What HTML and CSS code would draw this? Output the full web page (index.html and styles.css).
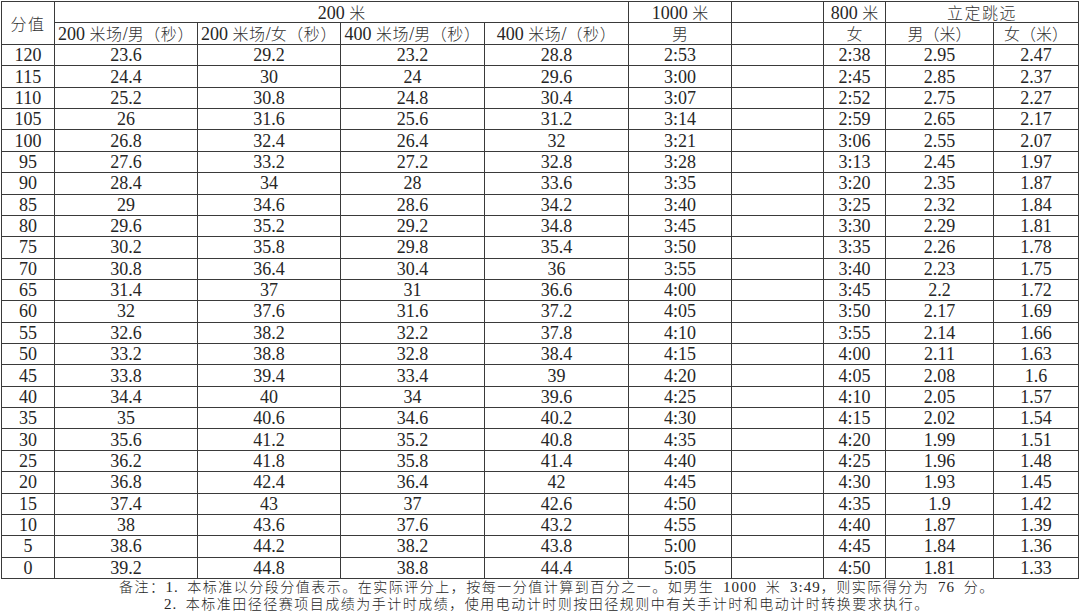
FILE: index.html
```html
<!DOCTYPE html>
<html lang="zh">
<head>
<meta charset="utf-8">
<title>评分标准</title>
<link rel="stylesheet" href="styles.css">
</head>
<body>
<div class="page">
<table class="score">
<colgroup>
<col class="w-score"><col class="w-200m"><col class="w-200f"><col class="w-400m"><col class="w-400f"><col class="w-1000"><col class="w-blank"><col class="w-800"><col class="w-jm"><col class="w-jf">
</colgroup>
<thead>
<tr class="h1">
<th rowspan="2"><span class="cn big">分值</span></th>
<th colspan="4">200 <span class="cn">米</span></th>
<th>1000 <span class="cn">米</span></th>
<th class="dash"></th>
<th>800 <span class="cn">米</span></th>
<th colspan="2"><span class="cn big">立定跳远</span></th>
</tr>
<tr class="h2">
<th>200 <span class="cn wide">米场</span>/<span class="cn wide">男（秒）</span></th>
<th>200 <span class="cn wide">米场</span>/<span class="cn wide">女（秒）</span></th>
<th>400 <span class="cn wide">米场</span>/<span class="cn wide">男（秒）</span></th>
<th>400 <span class="cn wide">米场</span>/<span class="cn wide">（秒）</span></th>
<th><span class="cn">男</span></th>
<th class="dash"></th>
<th><span class="cn">女</span></th>
<th><span class="cn">男（米）</span></th>
<th><span class="cn">女（米）</span></th>
</tr>
</thead>
<tbody id="rows"></tbody>
</table>
<div class="notes">
<p class="n1">备注：<span class="lat">1.</span> 本标准以分段分值表示。在实际评分上，按每一分值计算到百分之一。如男生<span class="lat"> 1000 </span>米<span class="lat"> 3:49</span>，则实际得分为<span class="lat"> 76 </span>分。</p>
<p class="n2"><span class="lat">2.</span> 本标准田径径赛项目成绩为手计时成绩，使用电动计时则按田径规则中有关手计时和电动计时转换要求执行。</p>
</div>
</div>
<script src="app.js"></script>
</body>
</html>
```
FILE: app.js
```js
var score=[120,115,110,105,100,95,90,85,80,75,70,65,60,55,50,45,40,35,30,25,20,15,10,5,0];
var m200=["23.6","24.4","25.2","26","26.8","27.6","28.4","29","29.6","30.2","30.8","31.4","32","32.6","33.2","33.8","34.4","35","35.6","36.2","36.8","37.4","38","38.6","39.2"];
var f200=["29.2","30","30.8","31.6","32.4","33.2","34","34.6","35.2","35.8","36.4","37","37.6","38.2","38.8","39.4","40","40.6","41.2","41.8","42.4","43","43.6","44.2","44.8"];
var m400=["23.2","24","24.8","25.6","26.4","27.2","28","28.6","29.2","29.8","30.4","31","31.6","32.2","32.8","33.4","34","34.6","35.2","35.8","36.4","37","37.6","38.2","38.8"];
var f400=["28.8","29.6","30.4","31.2","32","32.8","33.6","34.2","34.8","35.4","36","36.6","37.2","37.8","38.4","39","39.6","40.2","40.8","41.4","42","42.6","43.2","43.8","44.4"];
var r1000=["2:53","3:00","3:07","3:14","3:21","3:28","3:35","3:40","3:45","3:50","3:55","4:00","4:05","4:10","4:15","4:20","4:25","4:30","4:35","4:40","4:45","4:50","4:55","5:00","5:05"];
var r800=["2:38","2:45","2:52","2:59","3:06","3:13","3:20","3:25","3:30","3:35","3:40","3:45","3:50","3:55","4:00","4:05","4:10","4:15","4:20","4:25","4:30","4:35","4:40","4:45","4:50"];
var jm=["2.95","2.85","2.75","2.65","2.55","2.45","2.35","2.32","2.29","2.26","2.23","2.2","2.17","2.14","2.11","2.08","2.05","2.02","1.99","1.96","1.93","1.9","1.87","1.84","1.81"];
var jf=["2.47","2.37","2.27","2.17","2.07","1.97","1.87","1.84","1.81","1.78","1.75","1.72","1.69","1.66","1.63","1.6","1.57","1.54","1.51","1.48","1.45","1.42","1.39","1.36","1.33"];
var tb=document.getElementById("rows");
var html="";
for(var i=0;i<score.length;i++){
  html+="<tr><td>"+score[i]+"</td><td>"+m200[i]+"</td><td>"+f200[i]+"</td><td>"+m400[i]+"</td><td>"+f400[i]+"</td><td>"+r1000[i]+"</td><td class=\"dash\"></td><td>"+r800[i]+"</td><td>"+jm[i]+"</td><td>"+jf[i]+"</td></tr>";
}
tb.innerHTML=html;
```
FILE: styles.css
```css
html, body {
  margin: 0;
  padding: 0;
  background: #ffffff;
}
body {
  font-family: "Liberation Serif", "Noto Sans CJK SC", serif;
  color: #262626;
}
.page {
  padding: 1px 0 0 1px;
  width: 1079px;
}
.score {
  border-collapse: collapse;
  table-layout: fixed;
  width: 1077px;
  font-size: 18px;
}
.w-score { width: 53px; }
.w-200m { width: 143px; }
.w-200f { width: 143px; }
.w-400m { width: 144px; }
.w-400f { width: 144px; }
.w-1000 { width: 103px; }
.w-blank { width: 92px; }
.w-800 { width: 62px; }
.w-jm { width: 108px; }
.w-jf { width: 85px; }
.score th, .score td {
  border: 1px solid #3a3a3a;
  padding: 0;
  text-align: center;
  vertical-align: middle;
  font-weight: normal;
  line-height: 18px;
  white-space: nowrap;
}
.score .dash {
  border-right: 1px dashed #c4c4c4;
}
.h1 { height: 21px; }
.h2 { height: 22px; }
.score tbody tr { height: 21.36px; }
.cn {
  font-family: "Noto Sans CJK SC", sans-serif;
  font-weight: 300;
  font-size: 16px;
  line-height: 18px;
  color: #333;
}
.wide {
  letter-spacing: 0.6px;
}
.big {
  letter-spacing: 1.5px;
}
.notes {
  font-family: "Noto Sans CJK SC", sans-serif;
  font-weight: 300;
  font-size: 14px;
  line-height: 17px;
  color: #262626;
  letter-spacing: 1.5px;
  word-spacing: 4px;
  margin-top: -1px;
}
.notes .lat {
  font-family: "Liberation Serif", serif;
  font-weight: normal;
  font-size: 15px;
  letter-spacing: 1px;
}
.notes p {
  margin: 0;
  height: 17px;
  white-space: nowrap;
}
.n1 { padding-left: 118px; }
.n2 { padding-left: 163px; }
```
